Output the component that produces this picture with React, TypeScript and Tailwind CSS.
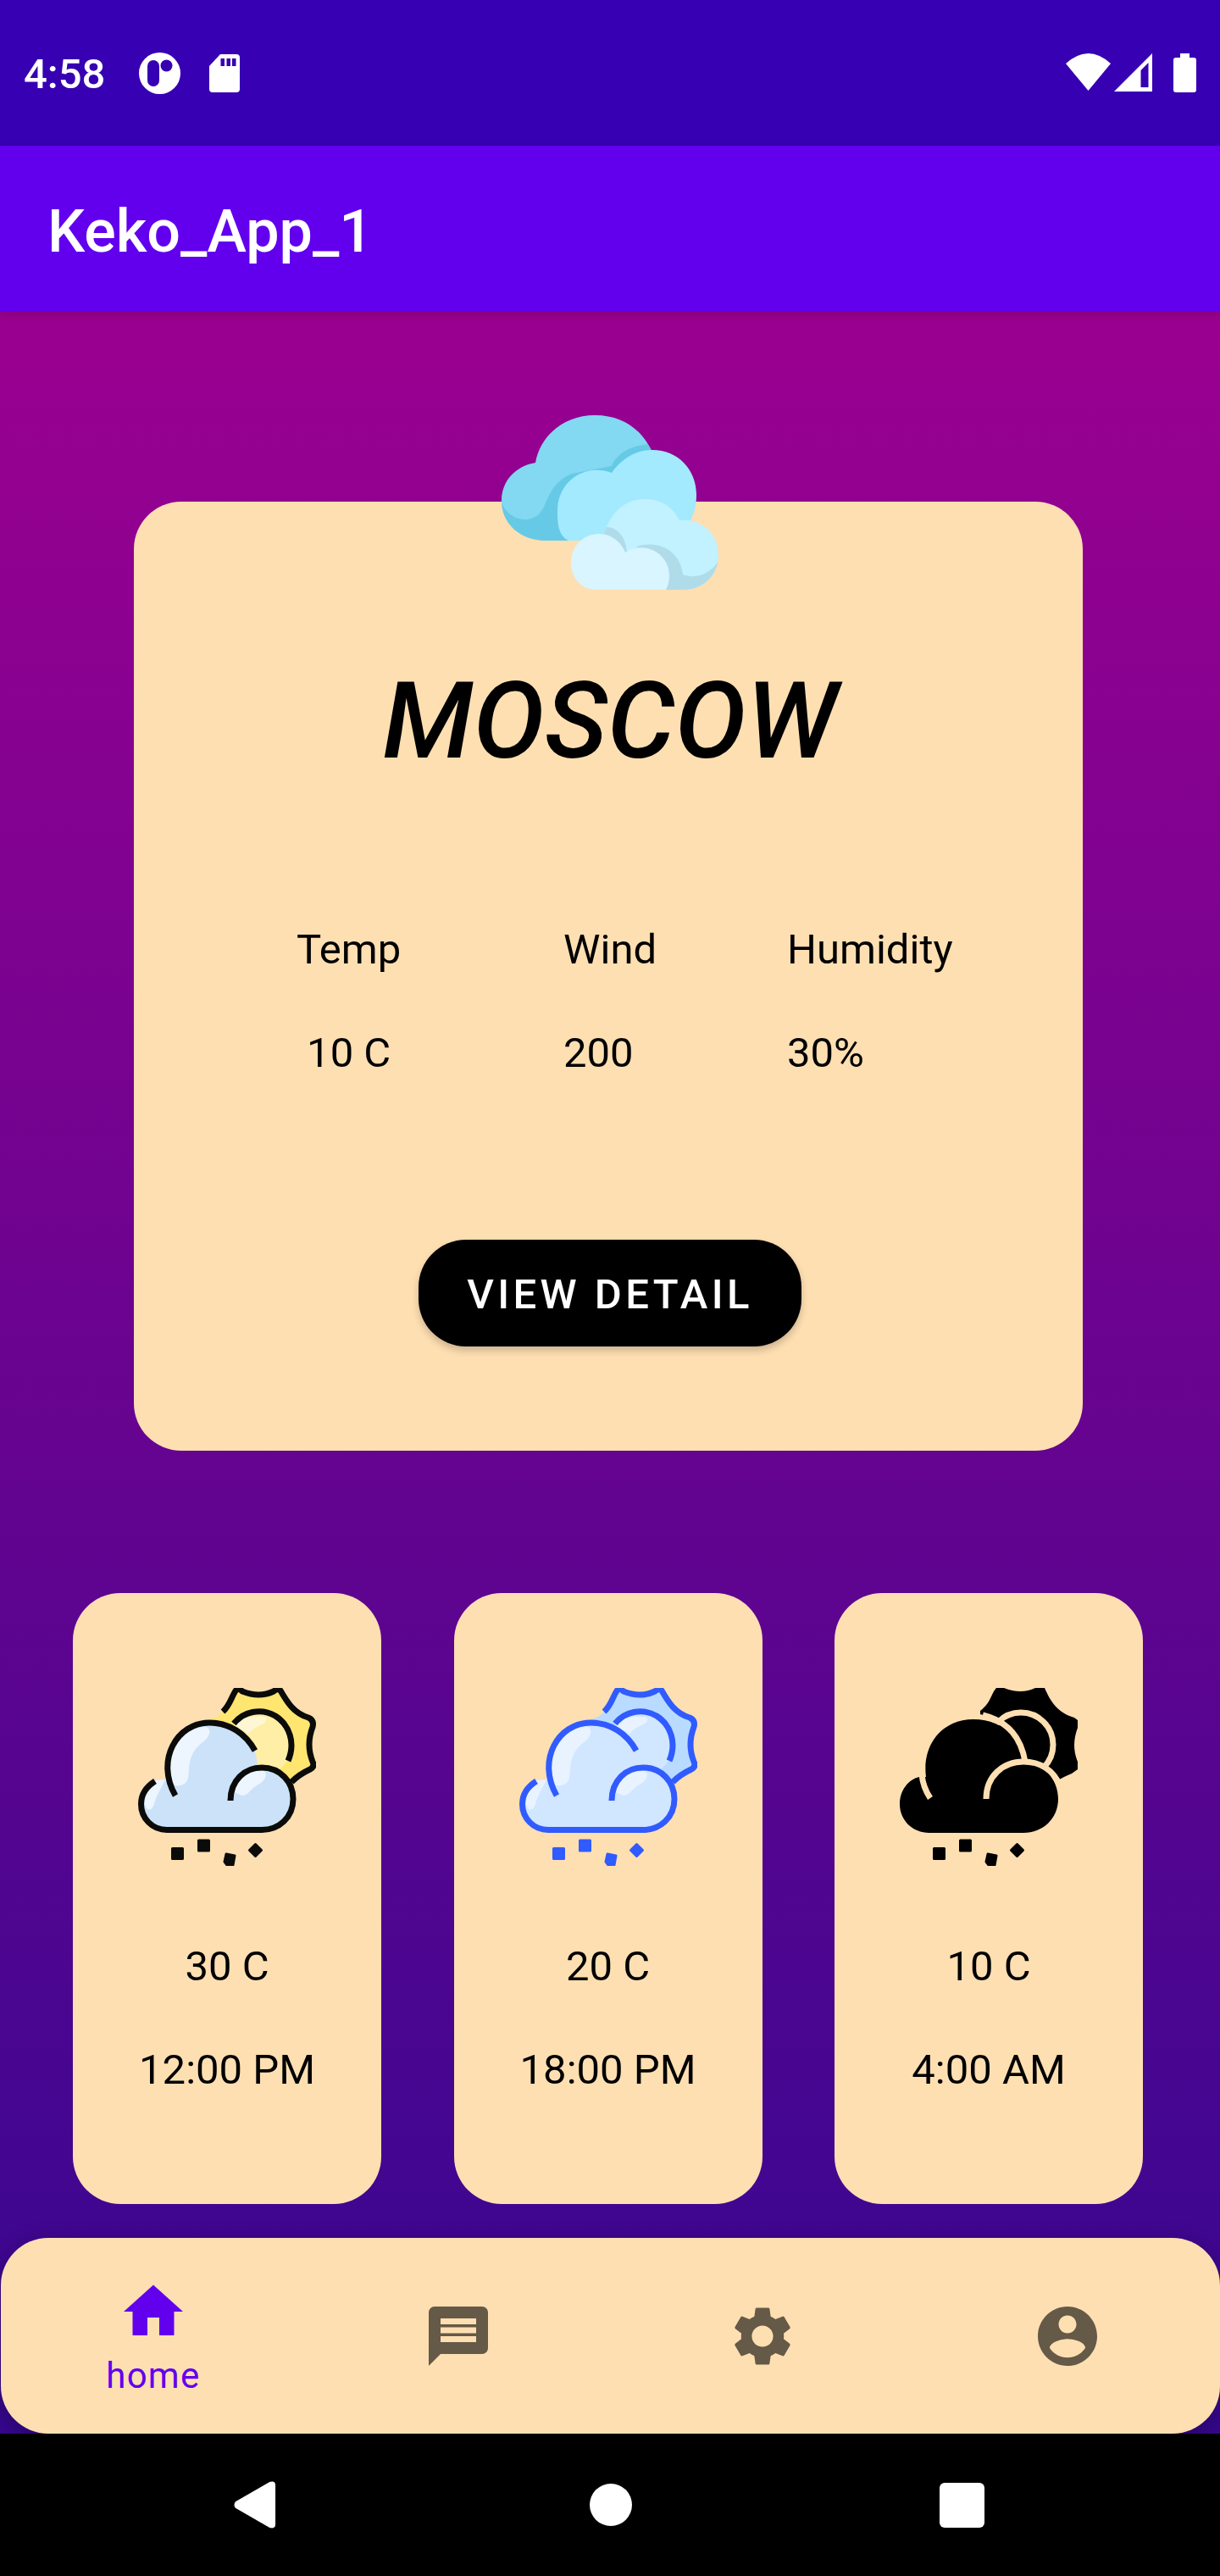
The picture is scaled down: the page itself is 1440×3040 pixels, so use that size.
import type { ReactNode } from "react";

type Palette = {
  line: string;
  cloud: string;
  shine: string;
  sun: string;
  core: string;
  coreShine: string;
};

const DAY: Palette = {
  line: "#0b0b0a",
  cloud: "#cbe2f9",
  shine: "#edf5fe",
  sun: "#fee671",
  core: "#ffefa6",
  coreShine: "#fff7d4",
};

const BLUE: Palette = {
  line: "#305bff",
  cloud: "#d1e6ff",
  shine: "#e8f3ff",
  sun: "#b9dbff",
  core: "#d1e6ff",
  coreShine: "#e8f3ff",
};

function Flakes({ color }: { color: string }) {
  return (
    <g fill={color} stroke={color} strokeWidth="3" strokeLinejoin="round">
      <rect x="40.500" y="189.500" width="12" height="12" />
      <rect x="71.500" y="180" width="12" height="12" />
      <path d="M104 196 L114 198 L112 209 H105 L102 205 Z" />
      <path d="M138.500 184.500 L145.500 191.500 L138.500 198.500 L131.500 191.500 Z" />
    </g>
  );
}

/* Cloud in front of a sun, drawn with an outline and filled areas. */
function OutlineWeather({ palette }: { palette: Palette }) {
  return (
    <svg viewBox="0 0 210 210" className="size-[210px] shrink-0" aria-hidden="true">
      <path
        fill={palette.sun}
        d="M84 37 Q96 35 101 26 C107 19 111 11 115 2 Q141 14 168 2 C176 17 184 30 206 38 Q198 66 206 92 Q190 98 181 110 L110 70 Z"
      />
      <circle cx="143" cy="67" r="38" fill={palette.core} />
      <path fill={palette.coreShine} d="M114 44 Q128 30 151 35 Q153 41 144 44 Q135 48 130 54 Z" />
      <path
        fill={palette.cloud}
        d="M34 168 C16 168 3 154 3 137 C3 120 16 108 32 108 L34 108 C28 72 48 39 84 39 C118 39 140 62 141 92 C166 90 184 109 184 131 C184 153 167 168 146 168 Z"
      />
      <path fill={palette.shine} d="M36 100 C36 72 52 46 80 46 C87 48 85 56 79 62 C58 76 61 94 59 106 C57 115 49 116 43 115 Z" />
      <path fill={palette.shine} d="M21 109 L32 108 C28 118 22 125 19 137 C16 147 8 145 8 135 C8 123 14 114 21 109 Z" />
      <path fill={palette.shine} d="M112 122 C116 106 131 96 149 98 C154 103 148 112 140 115 C131 121 130 127 122 127 Z" />
      <g fill="none" stroke={palette.line} strokeWidth="7" strokeLinejoin="round">
        <path d="M100 28 C109 20 110 10 116 2 Q119 0 123 4 Q143 12 160 4 Q165 0 168 3 C176 17 184 30 201 35 Q208 38 206 46 Q198 67 206 87 Q209 93 203 96 Q190 102 181 111" />
        <path d="M113 42 C124 28 145 23 162 33 C179 44 186 65 177 86" />
        <path d="M44 127 C20 85 46 41 84 41 C108 41 127 54 138 74" />
        <path d="M109 133 C109 109 126 94 146 94 C168 94 183 111 183 131 C183 153 166 167.500 146 167.500 H34 C17 167.500 3.500 154 3.500 137 C3.500 126 9 117 20 110" />
      </g>
      <Flakes color={palette.line} />
    </svg>
  );
}

/* Solid variant: parts are separated by strokes in the card colour. */
function SolidWeather() {
  return (
    <svg viewBox="0 0 210 210" className="size-[210px] shrink-0" aria-hidden="true">
      <path d="M95 27 C108 17 107 8 114 0 H123 Q143 8 160 0 H171 C178 16 186 29 206 35 L210 38 V47 Q202 68 210 87 V96 L203 101 Q193 105 187 109 L130 80 L114 36 L95 31 Z" />
      <circle cx="143" cy="67" r="38" fill="none" stroke="#fedfb2" strokeWidth="7" />
      <path d="M35 171 C15 171 0 156 0 137 C0 121 10 108 23 105 L31 105 C26 67 50 37 87 37 C116 37 137 53 145 82 L147 89 C171 90 187 108 187 131 C187 154 169 171 146 171 Z" />
      <g fill="none" stroke="#fedfb2" strokeWidth="7">
        <path d="M102 131 C102 104 122 87 146 87 C166 87 181 97 189 115" />
        <path d="M98 32 C129 40 143 59 148 87" />
        <path d="M26 102 C27 113 30 121 36 130" />
      </g>
      <Flakes color="#000000" />
    </svg>
  );
}

function Clouds() {
  return (
    <svg viewBox="0 0 256 208" className="h-[208px] w-[256px]" aria-hidden="true">
      <defs>
        <clipPath id="back-cloud">
          <path d="M53 148 C22 148 0 128 0 101 C0 77 17 60 40 56 C46 22 76 0 110 0 C145 0 167 19 178 44 L190 148 Z" />
        </clipPath>
        <clipPath id="front-cloud">
          <path d="M120 206 L110 145 L121 140 C129 114 146 99 170 99 C188 99 202 108 210 124 C236 121 256 140 256 165 C256 189 238 206 215 206 Z" />
        </clipPath>
      </defs>
      <g clipPath="url(#back-cloud)">
        <rect width="256" height="208" fill="#83d8f2" />
        <path fill="#66cae6" d="M0 104 C10 125 33 128 45 116 C54 107 55 80 83 69 L130 60 C135 45 156 33 182 34 V160 H0 Z" />
      </g>
      <path
        fill="#a3eaff"
        d="M79 148 C67 142 66 128 66 113 C66 79 97 56 130 68 C141 52 158 41 178 41 C208 41 230 64 230 94 C230 123 216 141 190 148 Z"
      />
      <g clipPath="url(#front-cloud)">
        <rect x="90" y="90" width="170" height="120" fill="#c2f1ff" />
        <path fill="#b0dcea" d="M120 132 C139 130 148 148 148 164 L162 154 C193 147 212 166 214 188 C229 194 247 187 256 172 V208 H120 Z" />
      </g>
      <path
        fill="#d9f5ff"
        d="M112 206 C94 206 82 192 82 174 C82 155 96 140 115 140 C129 140 141 149 146 162 C170 147 198 164 198 189 Q198 199 194 206 Z"
      />
    </svg>
  );
}

function StatusBar() {
  return (
    <header className="flex h-[172px] items-center justify-between bg-[#3700b3] px-7 text-white">
      <div className="flex items-center">
        <span className="pt-1 text-[49px] leading-[60px] font-medium">4:58</span>
        <svg viewBox="0 0 49 49" className="ml-10 size-[49px]" aria-hidden="true">
          <circle cx="24.500" cy="24.500" r="24.500" fill="#fff" />
          <rect x="10" y="9" width="14" height="31" rx="7" fill="#3700b3" />
          <circle cx="32.500" cy="15.500" r="7" fill="#3700b3" />
        </svg>
        <svg viewBox="0 0 36 45" className="ml-[34px] h-[45px] w-9" aria-hidden="true">
          <path fill="#fff" d="M13 0 H32 Q36 0 36 4 V41 Q36 45 32 45 H4 Q0 45 0 41 V14 Z" />
          <path fill="#3700b3" d="M13.500 5 H18 V14 H13.500 Z M20.500 5 H25 V14 H20.500 Z M27 5 H31.500 V14 H27 Z" />
        </svg>
      </div>
      <svg viewBox="0 0 154 46" className="h-[46px] w-[154px]" fill="#fff" aria-hidden="true">
        <path d="M0 12 Q26.500 -12 53 12 L26.500 44 Z" />
        <path fillRule="evenodd" d="M57 45 L102 0 V45 Z M88.500 20 V40 H97.500 V11 Z" />
        <path d="M135 0 H146 V5 H151 Q154 5 154 8 V43 Q154 46 151 46 H130 Q127 46 127 43 V8 Q127 5 130 5 H135 Z" />
      </svg>
    </header>
  );
}

const STATS = [
  { label: "Temp", value: "10 C", cell: "ml-[188px] w-[315px]", inner: "w-fit text-center" },
  { label: "Wind", value: "200", cell: "w-[264px]", inner: "w-fit text-left" },
  { label: "Humidity", value: "30%", cell: "", inner: "w-fit text-left" },
];

function CurrentWeather() {
  return (
    <section className="relative mr-[162px] ml-[158px] flex flex-col items-center rounded-[56px] bg-[#fedfb2] pt-[185px] pb-[123px] pl-1">
      <div className="absolute -top-[102px]">
        <Clouds />
      </div>
      <h2 className="text-[126px] leading-[148px] font-medium italic">MOSCOW</h2>
      <dl className="mt-[163px] flex w-full text-[49px] leading-[66px]">
        {STATS.map((s) => (
          <div key={s.label} className={s.cell}>
            <div className={s.inner}>
              <dt>{s.label}</dt>
              <dd className="mt-14">{s.value}</dd>
            </div>
          </div>
        ))}
      </dl>
      <button
        type="button"
        className="mt-[187px] h-[126px] rounded-[56px] bg-black px-[57px] pt-1 text-[49px] font-medium tracking-[0.09em] text-white shadow-[0_5px_8px_rgba(0,0,0,0.2)]"
      >
        VIEW DETAIL
      </button>
    </section>
  );
}

function ForecastCard({ icon, temp, time }: { icon: ReactNode; temp: string; time: string }) {
  return (
    <li className="flex w-[364px] flex-col items-center rounded-[56px] bg-[#fedfb2] pt-28 pb-[125px] text-[49px] leading-[66px]">
      {icon}
      <p className="mt-[86px]">{temp}</p>
      <p className="mt-14">{time}</p>
    </li>
  );
}

const TABS = [
  { name: "messages", path: "M20 2H4c-1.100 0-1.990.9-1.990 2L2 22l4-4h14c1.100 0 2-.9 2-2V4c0-1.100-.9-2-2-2zm-2 12H6v-2h12v2zm0-3H6V9h12v2zm0-3H6V6h12v2z" },
  {
    name: "settings",
    path: "M19.140 12.940c.040-.300.060-.610.060-.940 0-.320-.020-.640-.070-.940l2.030-1.580c.180-.140.230-.410.120-.610l-1.920-3.320c-.120-.220-.370-.290-.590-.220l-2.390.960c-.500-.380-1.030-.700-1.620-.940l-.360-2.540c-.040-.240-.240-.410-.480-.410h-3.840c-.240 0-.430.170-.470.410l-.360 2.540c-.590.240-1.130.570-1.620.940l-2.390-.960c-.220-.080-.470 0-.590.220L2.740 8.870c-.120.210-.080.470.120.610l2.030 1.580c-.050.300-.090.630-.090.940s.020.640.070.940l-2.030 1.580c-.180.140-.230.410-.120.610l1.920 3.320c.120.220.370.290.590.220l2.390-.960c.500.380 1.030.700 1.620.940l.360 2.540c.050.240.240.410.480.410h3.840c.240 0 .440-.170.470-.410l.360-2.540c.590-.240 1.130-.560 1.620-.940l2.390.960c.220.080.470 0 .590-.220l1.920-3.320c.120-.220.070-.470-.120-.610l-2.010-1.580zM12 15.600c-1.980 0-3.600-1.620-3.600-3.600s1.620-3.600 3.600-3.600 3.600 1.620 3.600 3.600-1.620 3.600-3.600 3.600z",
  },
  {
    name: "account",
    path: "M12 2C6.480 2 2 6.480 2 12s4.480 10 10 10 10-4.480 10-10S17.520 2 12 2zm0 3c1.660 0 3 1.340 3 3s-1.340 3-3 3-3-1.340-3-3 1.340-3 3-3zm0 14.200c-2.500 0-4.710-1.280-6-3.220.030-1.990 4-3.080 6-3.080 1.990 0 5.970 1.090 6 3.080-1.290 1.940-3.500 3.220-6 3.220z",
  },
];

function TabBar() {
  return (
    <nav className="ml-px grid h-[231px] grid-cols-4 rounded-[56px] bg-[#fedfb2] shadow-[0_8px_28px_rgba(0,0,0,0.3)]">
      <button type="button" className="flex flex-col items-center pt-[45px] text-[#6200ee]">
        <svg viewBox="0 0 24 24" className="size-[84px]" fill="currentColor" aria-hidden="true">
          <path d="M10 20v-6h4v6h5v-8h3L12 3 2 12h3v8z" />
        </svg>
        <span className="mt-1.5 text-[42px] leading-[56px] tracking-[0.03em]">home</span>
      </button>
      {TABS.map((t) => (
        <button key={t.name} type="button" aria-label={t.name} className="flex items-center justify-center text-[#655947]">
          <svg viewBox="0 0 24 24" className="size-[84px]" fill="currentColor" aria-hidden="true">
            <path d={t.path} />
          </svg>
        </button>
      ))}
    </nav>
  );
}

function SystemNav() {
  return (
    <footer className="flex h-[168px] items-center justify-between bg-black pr-[278px] pl-[276px]">
      <button type="button" aria-label="Back" className="w-14">
        <svg viewBox="0 0 52 58" className="h-14 w-[50px]" aria-hidden="true">
          <path fill="#fff" d="M2 25 L44 1 Q51 -1 51 5 V53 Q51 59 44 57 L2 33 Q-1 29 2 25 Z" />
        </svg>
      </button>
      <button type="button" aria-label="Home" className="size-[50px] rounded-full bg-white" />
      <button type="button" aria-label="Recent apps" className="size-[53px] rounded-md bg-white" />
    </footer>
  );
}

export default function App() {
  return (
    <div className="flex min-h-screen flex-col bg-black font-[Roboto,sans-serif] text-black">
      <StatusBar />
      <div className="z-10 flex h-[196px] items-center bg-[#6200ee] px-14 pt-1.5 text-white shadow-[0_4px_12px_rgba(0,0,0,0.15)]">
        <h1 className="text-[70px] leading-[82px] font-medium">Keko_App_1</h1>
      </div>
      <main className="flex grow flex-col overflow-hidden bg-linear-to-b/srgb from-[#9b0090] to-[#360790] pt-56">
        <CurrentWeather />
        <ul className="mt-42 flex justify-between pr-[91px] pl-[86px]">
          <ForecastCard icon={<OutlineWeather palette={DAY} />} temp="30 C" time="12:00 PM" />
          <ForecastCard icon={<OutlineWeather palette={BLUE} />} temp="20 C" time="18:00 PM" />
          <ForecastCard icon={<SolidWeather />} temp="10 C" time="4:00 AM" />
        </ul>
        <div className="mt-auto pt-10">
          <TabBar />
        </div>
      </main>
      <SystemNav />
    </div>
  );
}
